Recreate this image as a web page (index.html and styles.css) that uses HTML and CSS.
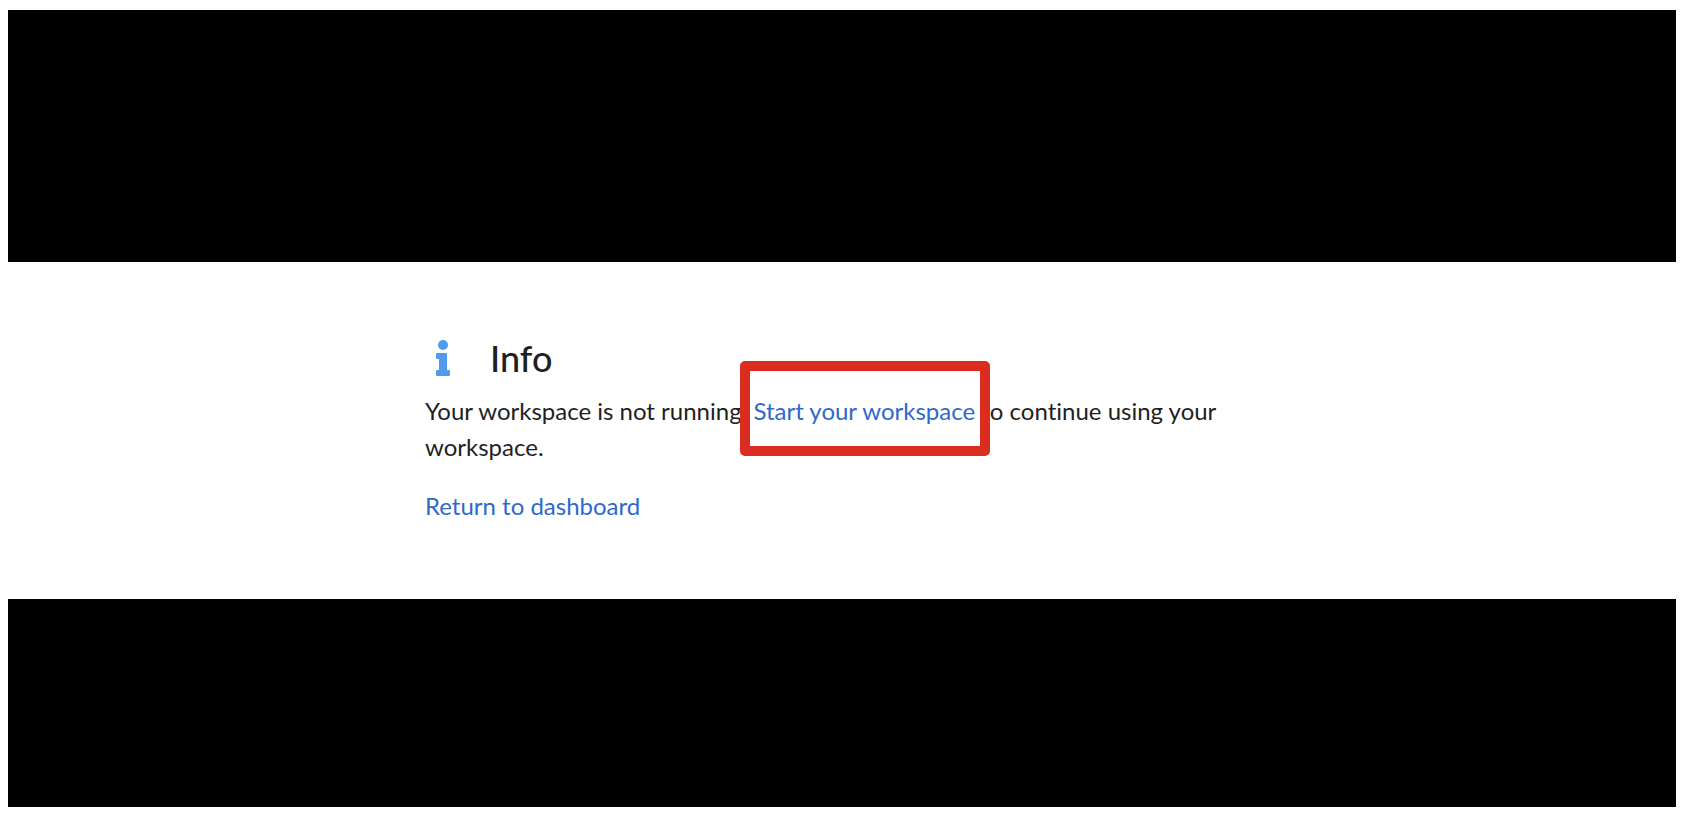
FILE: index.html
```html
<!DOCTYPE html>
<html lang="en">
<head>
<meta charset="utf-8">
<meta name="viewport" content="width=device-width, initial-scale=1">
<title>Info</title>
<link rel="stylesheet" href="styles.css">
</head>
<body>
<div class="page">
  <div class="band band-top"></div>
  <main class="notice">
    <header class="notice-header">
      <svg class="notice-icon" viewBox="0 0 14 36" aria-hidden="true">
        <circle cx="7" cy="5" r="5"/>
        <path d="M1 13H10Q11 13 11 14V30H13Q14 30 14 31V35Q14 36 13 36H1Q0 36 0 35V31Q0 30 1 30H3V19H1Q0 19 0 18V14Q0 13 1 13Z"/>
      </svg>
      <h1 class="notice-title">Info</h1>
    </header>
    <p class="notice-text">Your workspace is not running. <span class="marked"><a class="link" href="#start">Start your workspace</a></span> to continue using your workspace.</p>
    <p class="notice-text"><a class="link" href="#dashboard">Return to dashboard</a></p>
  </main>
  <div class="band band-bottom"></div>
</div>
</body>
</html>
```
FILE: styles.css
```css
* {
  box-sizing: border-box;
}

body {
  margin: 0;
  background: #fff;
  color: #1f1f1f;
  font-family: Lato, "Liberation Sans", sans-serif;
  font-variant-ligatures: none;
}

.page {
  display: flex;
  flex-direction: column;
  min-height: 100vh;
  padding: 10px 10px 9px 8px;
}

.band {
  background: #000;
}

.band-top {
  flex: 252 0 0;
}

.band-bottom {
  flex: 208 0 0;
}

.notice {
  width: 100%;
  max-width: 834px;
  margin: 0 auto;
  padding: 75px 0 75px;
}

.notice-header {
  display: flex;
  align-items: center;
  gap: 40px;
  height: 42px;
  margin: 0 0 14px 11px;
}

.notice-icon {
  width: 14px;
  height: 36px;
  fill: #519bee;
}

.notice-title {
  margin: 0;
  font-size: 36px;
  font-weight: 500;
  line-height: 42px;
}

.notice-text {
  margin: 0 0 23px;
  font-size: 24px;
  line-height: 36px;
}

.notice-text:last-child {
  margin-bottom: 0;
}

.link {
  color: #2e69cb;
  text-decoration: none;
}

.marked {
  position: relative;
}

.marked::after {
  content: "";
  position: absolute;
  inset: -35px -15px -31px -13px;
  border: 10px solid #da2d20;
  border-radius: 5px;
  pointer-events: none;
}
```
